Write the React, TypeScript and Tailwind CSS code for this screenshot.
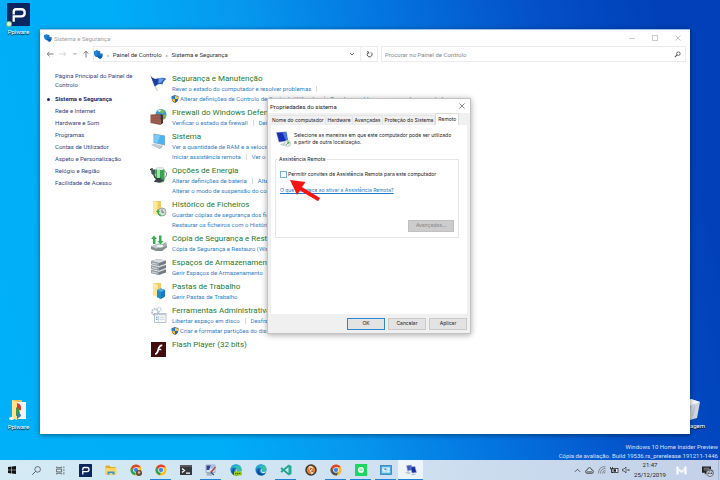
import type { ReactNode } from "react";

const uiFont = "font-[Roboto,'Open_Sans',sans-serif]";
const dialogFont = "font-[Inter,'Liberation_Sans',sans-serif]";

type IconProps = { className?: string };

function PLogo({ className }: IconProps) {
  return (
    <svg viewBox="0 0 24 24" className={className} aria-hidden="true">
      <rect width="24" height="24" rx="1" fill="#0b2561" />
      <path d="M7 19.500V15.500M7 12V9q0-2.500 2.500-2.500h5.500q3.500 0 3.500 3.700t-3.500 3.800H7v3" fill="none" stroke="#fff" strokeWidth="2.400" />
    </svg>
  );
}

function Shields({ className }: IconProps) {
  return (
    <svg viewBox="0 0 16 16" className={className} aria-hidden="true">
      <path d="M0 2Q4 2 5 0q2 2 6 2v4q0 5-5.500 7Q0 11 0 6z" fill="#1b76cc" />
      <path d="M6 6.500h9v4.500q-.5 3.500-4 5-4.500-1.500-5-5z" fill="#0a5cae" />
      <path d="M1.500 3 5 1.700v9.500Q1.500 8.500 1.500 6z" fill="#2587da" />
      <path d="M6 6.500h9v3.500H6z" fill="#1678c8" />
    </svg>
  );
}

function UacShield({ className }: IconProps) {
  return (
    <svg viewBox="0 0 16 16" className={className} aria-hidden="true">
      <path d="M8 0q4 2 7 2 .5 11-7 14Q.5 13 1 2q3 0 7-2z" fill="#4a5b70" />
      <path d="M8 1.200V8H2V3q3 0 6-1.800z" fill="#2c7fce" />
      <path d="M8 1.200Q11 3 14 3v5H8z" fill="#f9c52c" />
      <path d="M2 8h6v6.800Q3 12.500 2 8z" fill="#f4b926" />
      <path d="M8 8h6q-1 4.500-6 6.800z" fill="#1e68b9" />
    </svg>
  );
}

function FlagIcon() {
  return (
    <svg viewBox="0 0 18 18" className="size-[18px]" aria-hidden="true">
      <path d="M2.500 4Q3.500 12 7.500 16.500" stroke="#c3cfe2" strokeWidth="1.300" fill="none" />
      <path d="M.5 1.500Q3 6 8 4.500t8.500.5Q13 7 12.500 10.500 9 9 5 12.500z" fill="#315fc0" />
      <path d="M.5 1.500Q3 6 8 4.500L7.500 10q-1.500.5-2.500 2.500z" fill="#1b3f98" />
      <path d="M9 4.300q3-.5 5 .5L11 8.500 8.500 9z" fill="#6b9de9" />
    </svg>
  );
}

function FirewallIcon() {
  return (
    <svg viewBox="0 0 18 18" className="size-[18px]" aria-hidden="true">
      <circle cx="11" cy="6.500" r="5.500" fill="#3c9ad6" />
      <path d="M9 1.500q4-1 6 2l-2 2-3-1zM13 7l3.400 0q-.4 3-2.400 4.500z" fill="#73bf55" />
      <path d="M7.500 3q2-2 4-1l-2 2z" fill="#d8effb" />
      <path d="m.5 6.500 10-.5v11L.5 15z" fill="#94574a" />
      <path d="m10.500 6 2.500 1v8l-2.500 2z" fill="#592b24" />
      <path d="M.5 9.200l10-.5M.5 11.500l10 .2M.5 13.400l10 .8" stroke="#a97264" strokeWidth=".4" />
    </svg>
  );
}

function SystemIcon() {
  return (
    <svg viewBox="0 0 18 18" className="size-[18px]" aria-hidden="true">
      <path d="m3.500 1.500 11.500 2v10l-11.500-2.500z" fill="#8aa8bd" />
      <path d="m4.300 2.500 10 1.800v8.200L4.300 10.300z" fill="#49b4f2" />
      <path d="m4.300 2.500 6 1-3 7.500-3-.7z" fill="#7bcaf8" />
      <path d="m1 13 3-1.500 7.500 2-3 3z" fill="#c2ccd3" />
      <path d="m8.500 16.500 3-3 1.500.5-3 3z" fill="#a4b0ba" />
    </svg>
  );
}

function PowerIcon() {
  return (
    <svg viewBox="0 0 18 18" className="size-[18px]" aria-hidden="true">
      <rect x="5.500" y="1.500" width="9" height="15" rx="3" fill="#38a351" />
      <rect x="7" y="2.500" width="3" height="12.500" rx="1.500" fill="#9be4a0" />
      <ellipse cx="10" cy="2.500" rx="4" ry="1.500" fill="#e2e8e5" />
      <path d="M14 5q3.500 1 2.500 4t-3 4" fill="none" stroke="#83898e" strokeWidth="1" />
      <path d="M1 3.500h4.500v4L4 9.500 1.500 8z" fill="#47535b" />
      <path d="M1 4 0 3m2 1V2M4 9q1 5 7 3" fill="none" stroke="#31373c" strokeWidth="1.300" />
      <path d="M4 16q2-4 6-3l4 1-4 2.500z" fill="#3b4149" />
    </svg>
  );
}

function HistoryIcon() {
  return (
    <svg viewBox="0 0 18 18" className="size-[18px]" aria-hidden="true">
      <path d="M3 1h8v13.500L3 13z" fill="#edcc66" />
      <path d="m3 1 4.500 1v13.500L3 13z" fill="#ffe69a" />
      <circle cx="12" cy="12" r="4" fill="#d5ded9" stroke="#9aa59d" />
      <path d="M12 9.500v2.800h2" stroke="#4d5c54" fill="none" strokeWidth=".8" />
      <path d="M8 11.500q0 3 3 4.300" stroke="#38ae4d" strokeWidth="1.500" fill="none" />
      <path d="m6 12 2-3 2 3z" fill="#38ae4d" />
    </svg>
  );
}

function BackupIcon() {
  return (
    <svg viewBox="0 0 18 18" className="size-[18px]" aria-hidden="true">
      <path d="m1 12 8-3 8 2.500-5 5.500H6l-5-2z" fill="#c6cccc" />
      <path d="m1 12 5 2.500L17 11.500v1.800L12 17H6l-5-2z" fill="#858e8e" />
      <ellipse cx="10" cy="12" rx="4" ry="1.700" fill="#eff3f3" stroke="#9ba4a4" strokeWidth=".5" />
      <path d="M3 10V5H1l3-3.500L7 5H5.500v5zM9 1.500h2.500V7h2L10.500 10.500 7.500 7H9z" fill="#31b24a" />
      <path d="m12 10 4-2 1 3-3 2z" fill="#a8b2b1" />
    </svg>
  );
}

function StorageIcon() {
  return (
    <svg viewBox="0 0 18 18" className="size-[18px]" aria-hidden="true">
      {[10, 5.5, 1].map((y) => (
        <g key={y} transform={`translate(0 ${y})`}>
          <path d="m1 2 7-2 8 1.500v3L9 7 1 5z" fill="#737b80" />
          <path d="m1 2 7-2 8 1.500L9 4z" fill="#d9dddf" />
          <path d="m1 2 8 2v3L1 5z" fill="#9aa2a6" />
          <path d="m2 4 5 1.200" stroke="#e9eef0" strokeWidth=".7" />
        </g>
      ))}
    </svg>
  );
}

function WorkFoldersIcon() {
  return (
    <svg viewBox="0 0 18 18" className="size-[18px]" aria-hidden="true">
      <path d="M3 1h8v13.500L3 13z" fill="#edcc66" />
      <path d="m3 1 5 1.500v13L3 13z" fill="#ffe69a" />
      <path d="m7 8 4-1.500L15 8v6.500L11 17l-4-2z" fill="#1878b9" />
      <path d="m7 8 4-1.500L15 8 11 10z" fill="#4eb3e6" />
      <path d="m7 8 4 2v7l-4-2z" fill="#208fcd" />
    </svg>
  );
}

function AdminToolsIcon() {
  return (
    <svg viewBox="0 0 18 18" className="size-[18px]" aria-hidden="true">
      <circle cx="5" cy="6" r="3" fill="none" stroke="#b5c0c8" strokeWidth="1.800" strokeDasharray="1.800 .7" />
      <circle cx="9" cy="3.500" r="2" fill="none" stroke="#c3ced5" strokeWidth="1.500" strokeDasharray="1.300 .6" />
      <rect x="4.500" y="7.500" width="11.500" height="9" fill="#f8fafb" stroke="#a1adb8" strokeWidth=".7" />
      <path d="M4.500 8.500H16" stroke="#c3ccd5" strokeWidth="1.300" />
      <path d="M6 11.300h1.500M6 13.300h1.500" stroke="#4099d5" />
      <path d="M9.500 11.300h5m-5 2h5M8.500 10v6" stroke="#b1bdc6" strokeWidth=".6" />
    </svg>
  );
}

function FlashIcon() {
  return (
    <svg viewBox="0 0 18 18" className="size-[18px]" aria-hidden="true">
      <rect x="1" y="2" width="15" height="15" fill="#430d0d" />
      <path d="M12.300 5.300q-3-.3-4 4.200T5 13.800M8 9.500h3.300" stroke="#fff" strokeWidth="1.700" fill="none" />
    </svg>
  );
}

function RemotePc({ className }: IconProps) {
  return (
    <svg viewBox="0 0 18 18" className={className} aria-hidden="true">
      <path d="M0 1.500 12 .5l2 11-11 1.500z" fill="#a4b2cb" />
      <path d="m.8 2 10.500-.8 1.800 9.500-9.500 1.300z" fill="#1530b4" />
      <path d="M7 1.500 11.300 1.200l1.800 9.500-2 .3z" fill="#4775e3" />
      <path d="m4 15 8-2.500 3 1.500-7 3z" fill="#c8d0d8" />
      <circle cx="13" cy="14" r="3.500" fill="#e6efe7" stroke="#9aaba0" strokeWidth=".5" />
      <path d="m11.500 15.500 3-3m-2 0h2v2" stroke="#38a344" strokeWidth="1" fill="none" />
    </svg>
  );
}

function Chrome({ avatar = false, dark = false }: { avatar?: boolean; dark?: boolean }) {
  return (
    <svg viewBox="0 0 24 24" className="size-[12px]" aria-hidden="true">
      <circle cx="12" cy="12" r="11" fill={dark ? "#f0b92c" : "#fbc116"} />
      <path d="M2.500 6.500 8 15l4.500 2L9.500 22.700A11 11 0 0 1 2.500 6.500z" fill={dark ? "#54565a" : "#27a352"} />
      {dark && <path d="M8 15h8l-2 7.800A11 11 0 0 1 4 19z" fill="#54565a" />}
      <path d="M2.500 6.500a11 11 0 0 1 19 0H12L8 14z" fill="#dd4436" />
      <circle cx="12" cy="12" r="5.500" fill="#fff" />
      <circle cx="12" cy="12" r="4.300" fill="#4285e8" />
      {avatar && (
        <>
          <circle cx="18" cy="18" r="6" fill="#5e4a40" />
          <circle cx="18" cy="17" r="2.500" fill="#e2b596" />
        </>
      )}
    </svg>
  );
}

function Edge({ badge = false }: { badge?: boolean }) {
  return (
    <svg viewBox="0 0 24 24" className="size-[12px]" aria-hidden="true">
      <circle cx="12" cy="12" r="11" fill="#1473c6" />
      <path d="M1 11Q2 1 12 1t11 9q0 6-6 6-4 0-4-2 2-2 1-4-2-4-7-3t-6 4z" fill="#35c1a5" />
      <path d="M1 11Q2 1 12 1q6 0 9 4-9-4-14 2-4 1-6 4z" fill="#2aa9dc" />
      <path d="M9 10q-3 4 1 8 5 4 10 1l2-2q-3 6-9 6Q3 22 5 14q1-4 4-4z" fill="#0b4d9d" />
      <path d="M12 9q3 1 1 5 0 2 4 2 4 0 6-3l-1 3q-3 3-7 2t-4-4z" fill="#dcecf5" />
      {badge && <rect x="8" y="15" width="16" height="8" fill="#a5d80d" />}
      {badge && <path d="M10 19h12" stroke="#4a6d0c" strokeWidth="3" strokeDasharray="3 1" />}
    </svg>
  );
}

function FolderIcon() {
  return (
    <svg viewBox="0 0 24 24" className="size-[12px]" aria-hidden="true">
      <path d="M1 3h8l2 3h11v15H1z" fill="#e8aa27" />
      <path d="M1 8h22v13H1z" fill="#ffd75e" />
      <path d="M5 21v-6h14v6h-4v-3H9v3z" fill="#2f93dc" />
    </svg>
  );
}

function TerminalIcon() {
  return (
    <svg viewBox="0 0 24 24" className="size-[12px]" aria-hidden="true">
      <rect y="2" width="24" height="20" fill="#36393c" />
      <path d="M0 4h24" stroke="#777" strokeWidth="2" />
      <path d="m4 9 5 4-5 4m8 1h8" stroke="#fff" strokeWidth="2.500" fill="none" />
    </svg>
  );
}

function NotepadIcon() {
  return (
    <svg viewBox="0 0 24 24" className="size-[12px]" aria-hidden="true">
      <path d="M2 2h18v15H2z" fill="#d9e3f2" stroke="#68779b" strokeWidth="1" />
      <path d="M3 3h9l-4 9H3z" fill="#2b4398" />
      <path d="M12 3h7v6h-9z" fill="#a9bde6" />
      <path d="m10 16 10-11 2 2-9 11z" fill="#a8543e" />
      <path d="M4 18h8l2 5H3z" fill="#9fb0c4" />
      <path d="m12 17 6 5" stroke="#32517d" strokeWidth="2.500" />
    </svg>
  );
}

function CodeIcon() {
  return (
    <svg viewBox="0 0 24 24" className="size-[12px]" aria-hidden="true">
      <path d="M17 1v22l6-3V4z" fill="#1fae91" />
      <path d="M18 3 2 16m0-8 16 13" stroke="#20a58b" strokeWidth="3.500" fill="none" />
    </svg>
  );
}

function DuckIcon() {
  return (
    <svg viewBox="0 0 24 24" className="size-[12px]" aria-hidden="true">
      <circle cx="12" cy="12" r="11.500" fill="#3b3533" />
      <circle cx="12" cy="12" r="8.500" fill="#ed7d2c" />
      <path d="M9 4q5-1 7 4l-3 3 4 7-4 3-3-8-3-5z" fill="#f5e5cf" />
      <path d="m9 8 4 1-3 3m2 2 4 1" stroke="#4b302a" strokeWidth="1.500" fill="none" />
    </svg>
  );
}

function SpotIcon() {
  return (
    <svg viewBox="0 0 24 24" className="size-[12px]" aria-hidden="true">
      <rect width="24" height="24" fill="#1ed760" />
      <circle cx="12" cy="12" r="6" fill="#fff" />
      <path d="M8.500 10.500q4-1 7 .5M9 13.500q3-1 6 .5" stroke="#1ed760" strokeWidth="1.300" fill="none" />
    </svg>
  );
}

function PanelIcon() {
  return (
    <svg viewBox="0 0 24 24" className="size-[12px]" aria-hidden="true">
      <rect x="1" y="3" width="22" height="18" fill="#4aabe0" stroke="#2a7cb6" strokeWidth="1.500" />
      <rect x="4" y="6" width="16" height="12" fill="#a7dbf7" />
      <circle cx="9" cy="12" r="3.500" fill="#e4f5fd" />
      <path d="M9 12V8.500a3.500 3.500 0 0 1 3.500 3.500z" fill="#2f82c7" />
      <path d="M15 9h4m-4 3h4m-4 3h4" stroke="#fff" strokeWidth="1.500" />
    </svg>
  );
}

function TwoPcs() {
  return (
    <svg viewBox="0 0 24 24" className="size-[12px]" aria-hidden="true">
      <path d="m3 3 10-1 2 10-10 2z" fill="#4059c0" stroke="#b5c2da" />
      <path d="m11 6 9-1 3 12-9 1z" fill="#1a2fa0" stroke="#a9b7cc" />
      <path d="m1 17 6-2 4 3-4 2z" fill="#c3ccd6" stroke="#b3bfcc" />
      <path d="m12 20 8-1 2 2-8 2z" fill="#bfc8d2" />
    </svg>
  );
}

const sidebar = [
  "Rede e Internet",
  "Hardware e Som",
  "Programas",
  "Contas de Utilizador",
  "Aspeto e Personalização",
  "Relógio e Região",
  "Facilidade de Acesso",
];

type Row = { shield?: boolean; links: string[] };
type Category = { title: string; icon: ReactNode; rows: Row[] };

const categories: Category[] = [
  {
    title: "Segurança e Manutenção",
    icon: <FlagIcon />,
    rows: [
      { links: ["Rever o estado do computador e resolver problemas", ""] },
      { shield: true, links: ["Alterar definições de Controlo de Conta de Utilizador", "Resolver problemas comuns do computador"] },
    ],
  },
  {
    title: "Firewall do Windows Defender",
    icon: <FirewallIcon />,
    rows: [{ links: ["Verificar o estado da firewall", "Deixar"] }],
  },
  {
    title: "Sistema",
    icon: <SystemIcon />,
    rows: [
      { links: ["Ver a quantidade de RAM e a velocidade"] },
      { links: ["Iniciar assistência remota", "Ver o nome"] },
    ],
  },
  {
    title: "Opções de Energia",
    icon: <PowerIcon />,
    rows: [
      { links: ["Alterar definições de bateria", "Alterar"] },
      { links: ["Alterar o modo de suspensão do computador"] },
    ],
  },
  {
    title: "Histórico de Ficheiros",
    icon: <HistoryIcon />,
    rows: [
      { links: ["Guardar cópias de segurança dos ficheiros"] },
      { links: ["Restaurar os ficheiros com o Histórico"] },
    ],
  },
  {
    title: "Cópia de Segurança e Restauro",
    icon: <BackupIcon />,
    rows: [{ links: ["Cópia de Segurança e Restauro (Windows 7)"] }],
  },
  {
    title: "Espaços de Armazenamento",
    icon: <StorageIcon />,
    rows: [{ links: ["Gerir Espaços de Armazenamento"] }],
  },
  {
    title: "Pastas de Trabalho",
    icon: <WorkFoldersIcon />,
    rows: [{ links: ["Gerir Pastas de Trabalho"] }],
  },
  {
    title: "Ferramentas Administrativas",
    icon: <AdminToolsIcon />,
    rows: [
      { links: ["Libertar espaço em disco", "Desfragmentar"] },
      { shield: true, links: ["Criar e formatar partições do disco"] },
    ],
  },
  { title: "Flash Player (32 bits)", icon: <FlashIcon />, rows: [] },
];

function ControlPanel() {
  return (
    <section
      aria-label="Sistema e Segurança"
      className="absolute top-[29px] right-[30px] bottom-[26px] left-10 flex flex-col overflow-hidden border-t border-[#9cc4ee] bg-white shadow-[0_1px_5px_rgba(0,0,0,0.45)]"
    >
      <header className="flex h-4 shrink-0 items-center pl-1 text-[6px] text-[#a0a0a0]">
        <Shields className="mr-[2px] size-2" />
        <h1 className="grow">Sistema e Segurança</h1>
        <button aria-label="Minimizar" className="flex h-4 w-[23px] items-center justify-center">
          <span className="h-px w-[6px] bg-[#ccc]" />
        </button>
        <button aria-label="Maximizar" className="flex h-4 w-[23px] items-center justify-center">
          <span className="size-[6px] border border-[#ccc]" />
        </button>
        <button aria-label="Fechar" className="flex h-4 w-6 items-center justify-center">
          <svg viewBox="0 0 6 6" className="size-[6px]"><path d="m.5.5 5 5m0-5-5 5" stroke="#aaa" strokeWidth=".7" /></svg>
        </button>
      </header>
      <nav className="flex h-4 shrink-0 items-center text-[6px] text-[#333]">
        <div className="flex w-[53px] shrink-0 items-center justify-between pr-[3px] pl-[6px]">
          <button aria-label="Anterior"><svg viewBox="0 0 8 8" className="size-2"><path d="M7.500 4h-6M3.500 1.700 1.200 4l2.300 2.300" fill="none" stroke="#555" strokeWidth=".8" /></svg></button>
          <button aria-label="Seguinte"><svg viewBox="0 0 8 8" className="size-2"><path d="M.5 4h6M4.500 1.700 6.800 4 4.500 6.300" fill="none" stroke="#ccc" strokeWidth=".8" /></svg></button>
          <button aria-label="Recentes"><svg viewBox="0 0 4 8" className="h-2 w-1"><path d="m.5 3 1.500 1.500L3.500 3" fill="none" stroke="#777" strokeWidth=".8" /></svg></button>
          <button aria-label="Subir"><svg viewBox="0 0 8 8" className="size-2"><path d="M4 7.500v-6M1.700 3.500 4 1.200l2.300 2.300" fill="none" stroke="#555" strokeWidth=".8" /></svg></button>
        </div>
        <div className="flex h-4 w-[285px] shrink-0 items-center border border-[#ececec]">
          <Shields className="size-[9px]" />
          <ol className="flex grow items-center">
            <li><span className="px-1">›</span>Painel de Controlo</li>
            <li><span className="px-1">›</span>Sistema e Segurança</li>
          </ol>
          <button aria-label="Mostrar localizações" className="flex w-4 justify-center">
            <svg viewBox="0 0 6 6" className="size-[6px]"><path d="m1 2 2 2 2-2" fill="none" stroke="#555" strokeWidth=".9" /></svg>
          </button>
          <button aria-label="Atualizar" className="flex h-full w-[17px] items-center justify-center border-l border-[#ececec]">
            <svg viewBox="0 0 8 8" className="size-[7px]"><path d="M5.500 1.500A2.800 2.800 0 1 1 2 2.200M1 1h2v2" fill="none" stroke="#444" strokeWidth="1" /></svg>
          </button>
        </div>
        <div className="mr-1 ml-[3px] flex h-4 grow items-center border border-[#ececec] pr-1 pl-[3px]">
          <input aria-label="Procurar" placeholder="Procurar no Painel de Controlo" className="min-w-0 grow outline-none placeholder:text-[#888]" />
          <svg viewBox="0 0 8 8" className="size-[7px]" aria-hidden="true"><circle cx="5" cy="3" r="2" fill="none" stroke="#555" strokeWidth="1" /><path d="M3.500 4.500 1 7" stroke="#555" strokeWidth="1.200" /></svg>
        </div>
      </nav>
      <div className="flex pt-[9px] pl-[15px]">
        <aside className="w-[95px] shrink-0 text-[6px] text-[#35457f]">
          <a href="#home" className="block w-20 leading-[9px]">Página Principal do Painel de Controlo</a>
          <ul className="mt-1 leading-3">
            <li className="relative font-bold text-[#1c2a63] before:absolute before:top-[5px] before:-left-2 before:size-[3px] before:rounded-full before:bg-[#1c2a63]">
              Sistema e Segurança
            </li>
            {sidebar.map((s) => (
              <li key={s}><a href="#cat">{s}</a></li>
            ))}
          </ul>
        </aside>
        <main className="flex grow flex-col gap-1 pt-[3px]">
          {categories.map((c) => (
            <article key={c.title} className="flex items-start">
              <div className="-mb-2 w-[22px] shrink-0">{c.icon}</div>
              <div className="whitespace-nowrap">
                <h2 className="text-[8px] leading-[10px] text-[#1f7a2b]">{c.title}</h2>
                {c.rows.map((r, i) => (
                  <div key={i} className="flex h-[10px] items-center text-[6px] leading-[10px] text-[#2f7fc4]">
                    {r.shield && <UacShield className="-ml-px mr-px size-2" />}
                    {r.links.map((l, j) => (
                      <span key={j} className="flex items-center">
                        {j > 0 && <span className="mx-[5px] h-[6px] w-px bg-[#dcdcdc]" />}
                        {l && <a href="#task">{l}</a>}
                      </span>
                    ))}
                  </div>
                ))}
              </div>
            </article>
          ))}
        </main>
      </div>
    </section>
  );
}

const tabs = ["Nome do computador", "Hardware", "Avançadas", "Proteção do Sistema"];

function SystemDialog() {
  return (
    <section
      role="dialog"
      aria-label="Propriedades do sistema"
      className={`absolute top-[98px] left-[267px] flex h-[236px] w-[204px] flex-col border border-[#c4c4c4] bg-[#f0f0f0] text-[5px] text-[#222] shadow-[0_1px_6px_rgba(0,0,0,0.35)] ${dialogFont}`}
    >
      <header className={`flex h-[14px] shrink-0 items-center bg-white pl-[2px] text-[6px] ${uiFont}`}>
        <h2 className="grow">Propriedades do sistema</h2>
        <button aria-label="Fechar" className="flex w-4 justify-center">
          <svg viewBox="0 0 6 6" className="size-[6px]"><path d="m.5.5 5 5m0-5-5 5" stroke="#555" strokeWidth=".7" /></svg>
        </button>
      </header>
      <div role="tablist" className="mx-[3px] flex h-3 shrink-0 items-end gap-px">
        {tabs.map((t) => (
          <button key={t} role="tab" aria-selected="false" className="h-[10px] border-t border-r border-[#e4e4e4] px-px whitespace-nowrap">{t}</button>
        ))}
        <button role="tab" aria-selected="true" className="-ml-px h-3 border-x border-t border-[#dcdcdc] bg-white px-[2px] whitespace-nowrap">Remoto</button>
      </div>
      <div role="tabpanel" className="mx-[3px] grow bg-white px-1">
        <div className="mb-[2px] flex h-7 items-center pl-px">
          <RemotePc className="mr-[2px] size-4 shrink-0" />
          <p className="leading-[7px] whitespace-nowrap">
            Selecione as maneiras em que este computador pode ser utilizado<br />a partir de outra localização.
          </p>
        </div>
        <fieldset className="mr-1 flex h-[83px] flex-col border border-[#e6e6e6] px-1 pb-[5px]">
          <legend className="-ml-[2px] px-px leading-2">Assistência Remota</legend>
          <label className="mt-[7px] flex items-center leading-2 whitespace-nowrap">
            <input type="checkbox" className="mr-px size-[7px] appearance-none border border-[#6fb4e6] bg-white" />
            Permitir convites de Assistência Remota para este computador
          </label>
          <a href="#help" className="mt-2 leading-2 text-[#2a7bc6] underline">O que acontece ao ativar a Assistência Remota?</a>
          <button disabled className="mt-auto h-3 w-[46px] self-end border border-[#c0c0c0] bg-[#cccccc] text-[#858585]">Avançadas...</button>
        </fieldset>
      </div>
      <footer className="flex h-[19px] shrink-0 items-center justify-end gap-[3px] pr-[3px]">
        <button className="h-3 w-[38px] border border-[#2d86d2] bg-[#e3e3e3]">OK</button>
        <button className="h-3 w-[38px] border border-[#cacaca] bg-[#e3e3e3]">Cancelar</button>
        <button className="h-3 w-[38px] border border-[#cacaca] bg-[#e3e3e3]">Aplicar</button>
      </footer>
      <svg viewBox="0 0 30 22" className="absolute top-[80px] left-[22px] h-[22px] w-[30px]" aria-hidden="true">
        <path d="M0 1 15.500 3 12 8l18 11-2 3.200L10 11.500 7 16z" fill="#f51414" />
      </svg>
    </section>
  );
}

const apps: { name: string; icon: ReactNode; open?: boolean; active?: boolean }[] = [
  { name: "Pplware", icon: <PLogo className="size-[13px]" /> },
  { name: "Explorador", icon: <FolderIcon /> },
  { name: "Chrome pessoal", icon: <Chrome avatar /> },
  { name: "Chrome", icon: <Chrome />, open: true },
  { name: "Terminal", icon: <TerminalIcon /> },
  { name: "Editor", icon: <NotepadIcon />, open: true },
  { name: "Edge Canary", icon: <Edge badge /> },
  { name: "Edge", icon: <Edge /> },
  { name: "Code", icon: <CodeIcon />, open: true },
  { name: "Duck", icon: <DuckIcon /> },
  { name: "Chrome escuro", icon: <Chrome dark />, open: true },
  { name: "Música", icon: <SpotIcon />, open: true },
  { name: "Painel de Controlo", icon: <PanelIcon />, open: true },
  { name: "Sistema", icon: <TwoPcs />, open: true, active: true },
];

function Taskbar() {
  return (
    <footer className="flex h-5 shrink-0 items-stretch bg-linear-to-r from-[#d3ebf5] via-[#d0e2f2] to-[#c3d0e8]">
      <button aria-label="Iniciar" className="flex w-6 items-center justify-center">
        <svg viewBox="0 0 16 16" className="size-2"><path d="M0 2.200 7 1v6.500H0zM8 .9 16 0v7.500H8zM0 8.500h7V15l-7-1.200zm8 0h8V16l-8-1z" fill="#111" /></svg>
      </button>
      <button aria-label="Procurar" className="flex w-6 items-center justify-center">
        <svg viewBox="0 0 16 16" className="size-[9px]"><circle cx="10" cy="6" r="5" fill="none" stroke="#444" strokeWidth="1.300" /><path d="m6.500 9.500-6 6" stroke="#444" strokeWidth="1.500" /></svg>
      </button>
      <button aria-label="Vista de tarefas" className="flex w-[25px] items-center justify-center">
        <svg viewBox="0 0 16 16" className="size-[9px]"><path d="M1 1v2h9V1M1 15v-2h9v2M1 5.500h9v5H1zM14 1v3m0 2v3m0 2v4" fill="none" stroke="#444" strokeWidth="1.300" /></svg>
      </button>
      {apps.map((a) => (
        <button
          key={a.name}
          aria-label={a.name}
          className={`relative flex w-[25px] items-center justify-center ${a.active ? "bg-[#edf4fa]" : ""}`}
        >
          {a.icon}
          {a.open && <span className={`absolute bottom-0 h-px bg-[#1d80d6] ${a.active ? "inset-x-0" : "inset-x-[2px]"}`} />}
        </button>
      ))}
      <div className="ml-auto flex items-center">
        <button aria-label="Ícones ocultos" className="flex w-3 justify-center"><svg viewBox="0 0 8 8" className="size-[7px]"><path d="m1 5.500 3-3 3 3" fill="none" stroke="#222" strokeWidth=".8" /></svg></button>
        <button aria-label="OneDrive" className="flex w-[13px] justify-center"><svg viewBox="0 0 16 12" className="h-[7px] w-[9px]"><path d="M4 11q-3 0-3-3t3-3q1-4 4-4t4 4q3 0 3 3t-3 3z" fill="#cfe0ef" stroke="#222" strokeWidth="1.300" /><path d="M3 8.500h10" stroke="#333" strokeWidth="1.500" /></svg></button>
        <button aria-label="Rede" className="flex w-3 justify-center"><svg viewBox="0 0 16 16" className="size-2"><path d="M1 15Q1 1 15 1M5 15Q5 5 15 5M9 15Q9 9 15 9M12 15q0-3 3-3" fill="none" stroke="#555" strokeWidth="1.200" /></svg></button>
        <button aria-label="Bateria" className="flex w-3 justify-center"><svg viewBox="0 0 18 12" className="h-[6px] w-[9px]"><rect x="4" y="3" width="12" height="8" fill="#eef" stroke="#222" strokeWidth="1.500" /><path d="M7 4.500h5v5H7z" fill="#222" /><path d="M1 0v4h4V0M3 4v7h3" fill="none" stroke="#222" strokeWidth="1.500" /></svg></button>
        <button aria-label="Som" className="flex w-3 justify-center"><svg viewBox="0 0 16 16" className="size-2"><path d="M1 6h3l4-4v12l-4-4H1z" fill="none" stroke="#222" strokeWidth="1.200" /><path d="m11 6 4 4m0-4-4 4" stroke="#222" strokeWidth="1.200" /></svg></button>
        <time className="w-9 text-center text-[6px] leading-[10px] text-[#222]">21:47<br />25/12/2019</time>
        <button aria-label="Tray" className="flex w-[26px] justify-center"><svg viewBox="0 0 22 18" className="h-[9px] w-[11px]"><path d="M1 1v16h4V1zM17 1v16h4V1z" fill="#fff" /><path d="m5 4 6 5 6-5v6l-6 4-6-4z" fill="#f2f6fd" /></svg></button>
        <button aria-label="Notificações" className="relative flex w-6 justify-center">
          <svg viewBox="0 0 16 16" className="size-[9px]"><path d="M0 1h16v11H8l-3 3v-3H0z" fill="#222" /><path d="M3 4h10M3 7h10" stroke="#d6deec" /></svg>
          <span className="absolute top-[3px] left-3 flex size-2 items-center justify-center rounded-full border border-[#777] bg-[#c8d4ea] text-[5px] text-[#111]">22</span>
        </button>
        <span className="mr-px h-5 w-px bg-[#a9b8d2]" />
      </div>
    </footer>
  );
}

export default function App() {
  return (
    <div className={`flex h-screen w-full flex-col overflow-hidden text-[6px] ${uiFont}`}>
      <div className="relative grow bg-[linear-gradient(76deg,#00b0f8_0%,#00adf7_27%,#0698ef_42%,#0473df_60%,#0451c9_77%,#0140b8_92%)]">
        <figure className="absolute top-[3px] left-1 flex w-[29px] flex-col items-center text-white [text-shadow:0_1px_1px_#000]">
          <div className="relative">
            <PLogo className="size-[23px]" />
            <span className="absolute bottom-0 left-0 flex size-1 items-center justify-center rounded-full bg-[#e7f6e7] ring-1 ring-[#6fbc78]" />
          </div>
          <figcaption className="mt-[2px] leading-2">Pplware</figcaption>
        </figure>
        <figure className="absolute top-[399px] left-1 flex w-[29px] flex-col items-center text-white [text-shadow:0_1px_1px_#000]">
          <svg viewBox="0 0 20 22" className="h-[22px] w-5" aria-hidden="true">
            <path d="M3 1h10v19L3 19z" fill="#e8c35d" />
            <path d="M7 3h10v17H7z" fill="#f5f6f7" />
            <path d="m3 1 5 2v18l-5-2z" fill="#ffe28a" />
            <path d="M8 4q5 1 4 7l-4 1z" fill="#d93b34" />
            <path d="M7 8q4 2 4 8l-4 1z" fill="#36994c" />
            <path d="M8 14q4 0 4 3l-4 3z" fill="#3a77cf" />
            <ellipse cx="2.500" cy="19.500" rx="2.500" ry="1.500" fill="#fff" />
          </svg>
          <figcaption className="mt-[2px] leading-2">Pplware</figcaption>
        </figure>
        <figure className="absolute top-[398px] right-[15px] flex w-[31px] flex-col items-center text-white [text-shadow:0_1px_1px_#000]">
          <svg viewBox="0 0 20 22" className="h-[22px] w-5" aria-hidden="true">
            <path d="M1 4 11 1l9 3-3 16-7 2-5-2z" fill="#cdd6df" />
            <path d="m1 4 7-1 3-2 9 3-9 3z" fill="#f5f7f9" />
            <path d="m4 8 4 4m3-4-2 8m6-8-3 10" stroke="#b4bfca" strokeWidth="1" />
          </svg>
          <figcaption className="mt-[2px] self-end leading-2">Reciclagem</figcaption>
        </figure>
        <ControlPanel />
        <SystemDialog />
        <p className="absolute right-[2px] bottom-0 text-right leading-[9px] text-[#d5e2f7]">
          Windows 10 Home Insider Preview<br />Cópia de avaliação. Build 19536.rs_prerelease.191211-1446
        </p>
      </div>
      <Taskbar />
    </div>
  );
}
